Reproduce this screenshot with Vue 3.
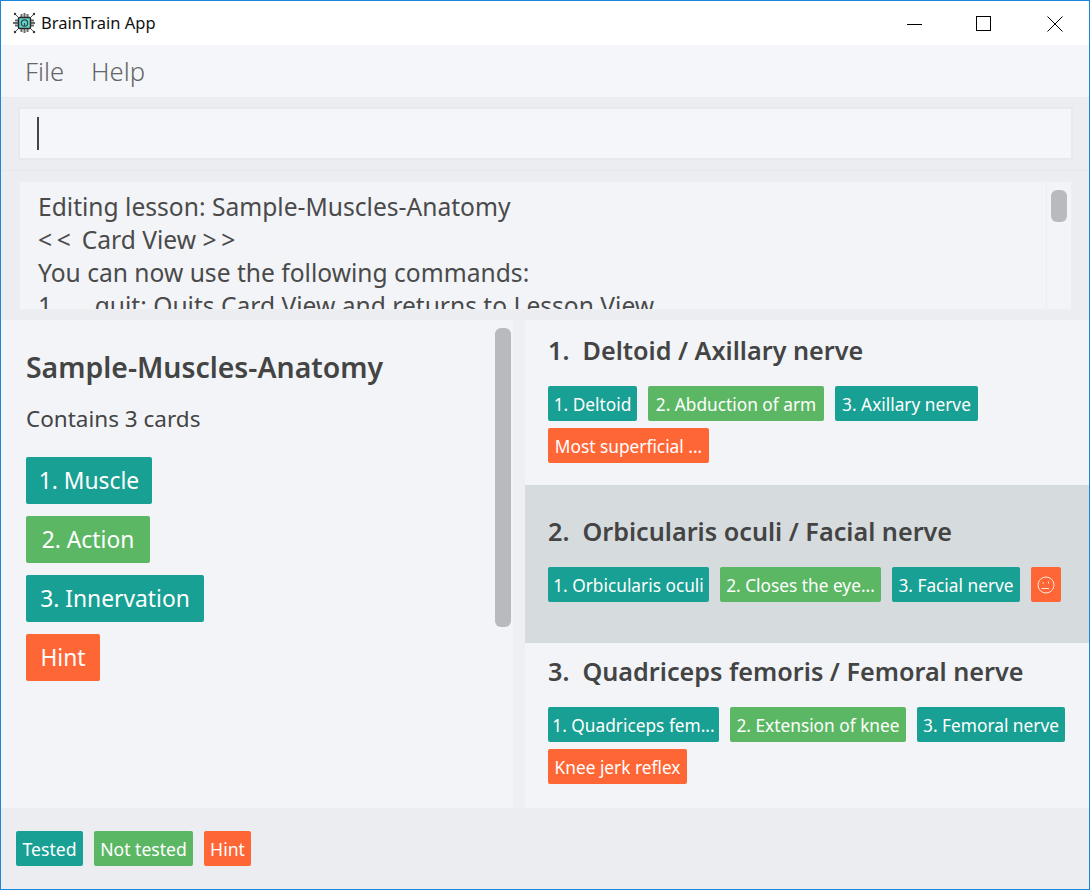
<script setup>
const legendTags = [
  { text: 'Tested', kind: 'teal', w: 67 },
  { text: 'Not tested', kind: 'green', w: 99 },
  { text: 'Hint', kind: 'orange', w: 47 },
]
const lessonTags = [
  { text: '1. Muscle', kind: 'teal', w: 126 },
  { text: '2. Action', kind: 'green', w: 124 },
  { text: '3. Innervation', kind: 'teal', w: 178 },
  { text: 'Hint', kind: 'orange', w: 74 },
]
const cards = [
  {
    title: '1.  Deltoid / Axillary nerve',
    tags: [
      { text: '1. Deltoid', kind: 'teal', w: 89 },
      { text: '2. Abduction of arm', kind: 'green', w: 176 },
      { text: '3. Axillary nerve', kind: 'teal', w: 143 },
      { text: 'Most superficial ...', kind: 'orange', w: 161 },
    ],
  },
  {
    title: '2.  Orbicularis oculi / Facial nerve',
    selected: true,
    tags: [
      { text: '1. Orbicularis oculi', kind: 'teal', w: 161 },
      { text: '2. Closes the eye...', kind: 'green', w: 161 },
      { text: '3. Facial nerve', kind: 'teal', w: 128 },
      { smile: true, kind: 'orange', w: 30 },
    ],
  },
  {
    title: '3.  Quadriceps femoris / Femoral nerve',
    tags: [
      { text: '1. Quadriceps fem...', kind: 'teal', w: 171 },
      { text: '2. Extension of knee', kind: 'green', w: 176 },
      { text: '3. Femoral nerve', kind: 'teal', w: 148 },
      { text: 'Knee jerk reflex', kind: 'orange', w: 139 },
    ],
  },
]
</script>

<template>
  <div class="window">
    <header class="titlebar">
      <svg class="logo" width="24" height="24" viewBox="0 0 24 24">
        <g stroke="#6b6b6b" stroke-width="2" fill="none">
          <path d="M9.5 7V3M12.5 7V2M15.5 7V3M9.5 17v4M12.5 17v5M15.5 17v4M7 9.5H3M7 12H1M7 14.5H3M18 9.5h4M18 12h5M18 14.5h4" />
        </g>
        <g stroke="#555" stroke-width="1" fill="none">
          <path d="M7 7 3.5 3.5M18 7l3.5-3.5M7 17l-3.5 3.5M18 17l3.5 3.5" />
        </g>
        <g fill="#333">
          <circle cx="3" cy="3" r="1.2" /><circle cx="22" cy="3" r="1.2" />
          <circle cx="3" cy="21" r="1.2" /><circle cx="22" cy="21" r="1.2" />
        </g>
        <rect x="6.5" y="6.5" width="12" height="11" rx="1" fill="#62d3c4" stroke="#2b2b2b" stroke-width="1.4" />
        <circle cx="12.5" cy="12" r="3.2" fill="none" stroke="#2f4a55" stroke-width="1.2" />
        <path d="M12.5 15v-3" stroke="#2f4a55" stroke-width="1.1" />
      </svg>
      <span class="app-name">BrainTrain App</span>
      <div class="win-controls">
        <span class="ctl first"><svg width="16" height="16" viewBox="0 0 16 16"><path d="M0 8.5h15" stroke="#000" /></svg></span>
        <span class="ctl"><svg width="16" height="16" viewBox="0 0 16 16"><rect x="0.5" y="0.5" width="14" height="14" fill="none" stroke="#000" /></svg></span>
        <span class="ctl"><svg width="16" height="16" viewBox="0 0 16 16"><path d="M.5.5l15 15M15.5.5l-15 15" stroke="#000" /></svg></span>
      </div>
    </header>

    <nav class="menubar">
      <span>File</span>
      <span>Help</span>
    </nav>

    <section class="command-area">
      <div class="command-box"><span class="caret"></span></div>
    </section>

    <section class="result-area">
      <div class="result-box">
        <div class="result-text">
          <div>Editing lesson: Sample-Muscles-Anatomy</div>
          <div><span class="spaced">&lt;&lt;</span> Card View <span class="spaced">&gt;&gt;</span></div>
          <div>You can now use the following commands:</div>
          <div>1.&nbsp;&nbsp;&nbsp;&nbsp;&nbsp;<span class="tabbed">quit: Quits Card View and returns to Lesson View</span></div>
        </div>
        <div class="result-scroll"><span class="thumb small"></span></div>
      </div>
    </section>

    <main class="split">
      <aside class="lesson">
        <div class="lesson-body">
          <h1>Sample-Muscles-Anatomy</h1>
          <p>Contains 3 cards</p>
          <div class="lesson-tags">
            <span v-for="t in lessonTags" :key="t.text" class="big-tag" :class="t.kind" :style="{ width: t.w + 'px' }">{{ t.text }}</span>
          </div>
        </div>
        <span class="thumb large"></span>
      </aside>
      <div class="divider"></div>
      <div class="cards">
        <article v-for="c in cards" :key="c.title" class="card" :class="{ selected: c.selected }">
          <h2>{{ c.title }}</h2>
          <div class="tags">
            <span v-for="(t, i) in c.tags" :key="i" class="tag" :class="t.kind" :style="{ width: t.w + 'px' }">
              <template v-if="!t.smile">{{ t.text }}</template>
              <svg v-else width="18" height="18" viewBox="0 0 18 18" fill="none" stroke="#fde6dd" stroke-width="1">
                <circle cx="9" cy="9" r="8" />
                <path d="M4.5 12.5h7.5M5.5 7h1.5M11.5 5.5v2" />
              </svg>
            </span>
          </div>
        </article>
      </div>
    </main>

    <footer class="legend">
      <span v-for="t in legendTags" :key="t.text" class="tag" :class="t.kind" :style="{ width: t.w + 'px' }">{{ t.text }}</span>
    </footer>
  </div>
</template>

<style>
html, body { margin: 0; padding: 0; overflow: hidden; background: #fff; }
</style>

<style scoped>
.window {
  box-sizing: border-box;
  width: 1090px;
  height: 890px;
  border: 1px solid #1a86dc;
  display: flex;
  flex-direction: column;
  overflow: hidden;
  font-family: "Noto Sans", "Open Sans", sans-serif;
  color: #444;
  background: #f2f4f8;
}
.titlebar {
  height: 44px;
  flex: none;
  background: #fff;
  display: flex;
  align-items: center;
  padding-left: 11px;
}
.logo { flex: none; margin-top: -1px; }
.app-name { margin-left: 5px; font-size: 16.5px; color: #111; margin-top: -1px; }
.win-controls { margin-left: auto; display: flex; margin-right: -1px; }
.ctl { width: 71px; height: 44px; display: flex; align-items: center; justify-content: center; margin-top: 1px; }
.ctl.first { width: 67px; }
.menubar {
  height: 53px;
  flex: none;
  box-sizing: border-box;
  background: #f5f6fa;
  display: flex;
  align-items: center;
  padding-left: 24px;
  gap: 27px;
  font-size: 25.6px;
  font-weight: 300;
  color: #666;
  border-bottom: 1px solid #e9eaee;
}
.command-area {
  height: 73px;
  flex: none;
  box-sizing: border-box;
  background: #ecedf1;
  padding: 9px 16px 0 17px;
  border-bottom: 1px solid #e7e8ec;
}
.command-box {
  box-sizing: border-box;
  height: 53px;
  background: #f5f6fa;
  border: 2px solid #e8e9ed;
  display: flex;
  align-items: center;
  padding-left: 17px;
}
.caret { width: 1.5px; height: 33px; background: #444; }
.result-area {
  height: 149px;
  flex: none;
  box-sizing: border-box;
  background: #ecedf1;
  padding: 9px 16px 0 17px;
}
.result-box {
  box-sizing: border-box;
  height: 131px;
  background: #f2f4f8;
  border: 2px solid #eceef2;
  display: flex;
  overflow: hidden;
}
.result-text {
  flex: 1;
  padding: 8px 0 0 18px;
  font-size: 24.6px;
  line-height: 33px;
  color: #4a4a4a;
  white-space: nowrap;
  overflow: hidden;
}
.spaced { letter-spacing: 4.6px; }
.tabbed { margin-left: 4px; }
.result-scroll {
  width: 25px;
  flex: none;
  border-left: 1px solid #ebedf1;
  padding: 8px 0 0 4px;
  box-sizing: border-box;
}
.thumb { display: block; background: #b9babe; border-radius: 6px; width: 16px; }
.thumb.small { height: 32px; }
.split { flex: 1; min-height: 0; display: flex; }
.lesson {
  width: 512px;
  flex: none;
  box-sizing: border-box;
  display: flex;
  justify-content: space-between;
  padding: 8px 2px 0 0;
}
.thumb.large { height: 299px; }
.lesson-body { padding: 21px 0 0 25px; }
.lesson-body h1 {
  margin: 0;
  font-size: 28.4px;
  line-height: 36px;
  font-weight: 600;
  color: #444;
}
.lesson-body p {
  margin: 18px 0 0;
  font-size: 22.5px;
  line-height: 32px;
  color: #444;
}
.lesson-tags {
  margin-top: 22px;
  display: flex;
  flex-direction: column;
  align-items: flex-start;
  gap: 12px;
}
.big-tag {
  height: 47px;
  line-height: 47px;
  text-align: center;
  font-size: 22.8px;
  color: #fff;
  border-radius: 2px;
}
.divider { width: 12px; flex: none; background: #eeeff3; }
.cards { flex: 1; min-width: 0; display: flex; flex-direction: column; }
.card { box-sizing: border-box; padding: 14px 0 0 23px; height: 165px; }
.card.selected { background: #d6dbde; height: 158px; padding-top: 30px; }
.card:last-child { padding-top: 12px; }
.card h2 {
  margin: 0;
  font-size: 25.2px;
  line-height: 32px;
  font-weight: 600;
  color: #444;
  white-space: pre;
}
.tags { display: flex; flex-wrap: wrap; gap: 7px 11px; margin-top: 20px; max-width: 530px; }
.tag {
  height: 35px;
  box-sizing: border-box;
  padding-top: 1px;
  font-size: 17.3px;
  color: #fff;
  border-radius: 2px;
  white-space: nowrap;
  display: inline-flex;
  align-items: center;
  justify-content: center;
}
.teal { background: #17a093; }
.green { background: #5cb764; }
.orange { background: #ff6636; }
.legend {
  height: 81px;
  flex: none;
  box-sizing: border-box;
  background: #ecedf1;
  display: flex;
  align-items: flex-start;
  gap: 11px;
  padding: 23px 0 0 15px;
}
.legend .tag { font-size: 17.6px; }
</style>
